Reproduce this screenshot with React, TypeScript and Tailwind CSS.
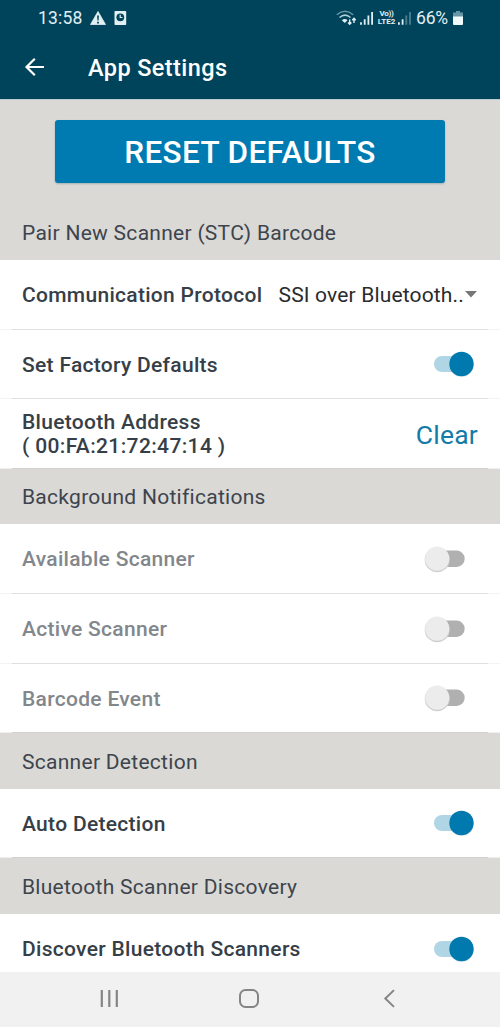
import type { ReactNode } from "react";

function Toggle({ on }: { on: boolean }) {
  return (
    <svg className="mr-[24px] h-[32px] w-[54px] shrink-0" viewBox="0 0 54 32">
      {on ? (
        <>
          <rect x="12" y="8" width="36" height="16" rx="8" fill="#b0d6e6" />
          <circle cx="39.5" cy="17" r="12" fill="#003c5a" opacity=".12" />
          <circle cx="39.5" cy="16" r="12.2" fill="#0079ae" />
        </>
      ) : (
        <>
          <rect x="6" y="7.500" width="36.700" height="16.400" rx="8.200" fill="#b0b0b0" />
          <circle cx="15.200" cy="16.700" r="12.500" fill="#cfcfcf" />
          <circle cx="15.200" cy="15.700" r="12.100" fill="#ececec" />
        </>
      )}
    </svg>
  );
}

function Section({ children, className }: { children: ReactNode; className: string }) {
  return (
    <h2 className={`flex shrink-0 items-center bg-[#dad9d5] pl-[22px] text-[21px] font-normal tracking-[0.280px] whitespace-nowrap text-[#3d444d] ${className}`}>
      {children}
    </h2>
  );
}

function Row({ label, children, className, off, last }: { label: ReactNode; children: ReactNode; className: string; off?: boolean; last?: boolean }) {
  return (
    <div className={`flex shrink-0 flex-col bg-white ${className}`}>
      <div className={`flex min-h-0 flex-1 items-center justify-between pl-[22px] text-[21px] leading-[24px] font-medium tracking-[0.300px] whitespace-nowrap ${off ? "text-[#82878c]" : "text-[#363e47]"}`}>
        <span className="pt-px">{label}</span>
        {children}
      </div>
      <div className={`flex h-px shrink-0 ${last ? "bg-[#efefed]" : "bg-[#f3f3f3]"}`}>
        <div className={`mx-[12px] flex-1 ${last ? "bg-[#d2d2cf]" : "bg-[#dfdfdf]"}`} />
      </div>
    </div>
  );
}

export default function App() {
  return (
    <div className="flex h-[1027px] w-[500px] flex-col overflow-hidden bg-[#dad9d5] font-['Roboto',sans-serif]">
      <header className="flex h-[99px] shrink-0 flex-col bg-[#00445b] text-white">
        <div className="flex h-[36px] items-center justify-between pr-[37px] pl-[38px] text-[#e2eff3]">
          <div className="flex items-center">
            <span className="w-[52px] text-[17.500px] tracking-[0.200px]">13:58</span>
            <svg className="h-[16px] w-[37px]" viewBox="0 0 37 16">
              <path d="M8 1.500 15.500 14.500H.500Z" fill="currentColor" stroke="currentColor" strokeWidth=".8" strokeLinejoin="round" />
              <path d="M7.100 5.500h1.800l-.3 5H7.400Zm0 6.200h1.800v1.700H7.100Z" fill="#00445b" />
              <rect x="24.500" y="1" width="11.700" height="14" rx=".8" fill="currentColor" />
              <circle cx="30.300" cy="7.300" r="3.900" fill="#00445b" />
              <path d="M30.200 4.700v2.800h2.300" fill="none" stroke="currentColor" strokeWidth="1.200" />
            </svg>
          </div>
          <div className="flex items-center">
            <svg className="mr-[2px] h-[18px] w-[39px]" viewBox="0 0 39 18" fill="none">
              <path d="M.8 5.700Q9 -1.300 17.200 5.700" stroke="#6896a5" strokeWidth="1.500" />
              <path d="M3.500 8.500Q9 3.700 14.500 8.500" stroke="#b5ced6" strokeWidth="1.500" />
              <path d="M5.800 11.300Q9 8.700 11.500 11.300L8.800 14Z" fill="#e2eff3" />
              <path d="M13.700 10.500V15M12 13.400 13.700 15.200 15.400 13.400M18 14V9.500M16.300 11.200 18 9.300 19.700 11.200" stroke="#e2eff3" strokeWidth="1.400" />
              <path d="M25 13.200v2.600M28.700 10.300v5.500M32.400 6.600v9.200M36.100 3v12.800" stroke="#e2eff3" strokeWidth="1.800" />
            </svg>
            <div className="flex w-[19px] flex-col items-center text-[8px] leading-[8px] font-bold whitespace-nowrap">
              <span className="tracking-[-0.300px]">Vo))</span>
              <span>LTE2</span>
            </div>
            <svg className="mr-[4px] ml-px h-[18px] w-[15px]" viewBox="0 0 15 18" strokeWidth="1.800">
              <path d="M1.900 13.200v2.600M5.600 10.300v5.500" stroke="#e2eff3" />
              <path d="M9.300 6.600v9.200M13 3v12.800" stroke="#4c7e90" />
            </svg>
            <span className="w-[37px] text-[17.500px] tracking-[-0.200px] whitespace-nowrap">66%</span>
            <svg className="h-[15px] w-[10px]" viewBox="0 0 10 15">
              <path d="M3 0h4v1.500h3V6H0V1.500h3Z" fill="#6797a6" />
              <path d="M0 5.500h10V13a1 1 0 0 1-1 1H1a1 1 0 0 1-1-1Z" fill="#f1fafb" />
            </svg>
          </div>
        </div>
        <div className="flex h-[63px] items-center pl-[24px]">
          <svg className="mb-px h-[20px] w-[64px]" viewBox="0 0 64 20" fill="none" stroke="white" strokeWidth="2.200">
            <path d="M20 10H2.500M10.800 1.700 2.500 10l8.300 8.300" />
          </svg>
          <h1 className="pt-[2px] text-[23.500px] font-medium tracking-[0.400px]">App Settings</h1>
        </div>
      </header>
      <main className="flex min-h-0 flex-1 flex-col overflow-hidden">
        <div className="flex h-[106px] shrink-0 items-start justify-center border-t border-[#b8cbd0] pt-[20px]">
          <button className="h-[62.500px] w-[390px] rounded-[3px] bg-[#007bb1] pt-[3px] text-[31.500px] font-medium tracking-[0.350px] text-white shadow-[0_1px_2px_rgba(0,60,90,0.25)]">RESET DEFAULTS</button>
        </div>
        <Section className="h-[55px] pt-[2px]">Pair New Scanner (STC) Barcode</Section>
        <Row className="h-[70px]" label="Communication Protocol">
          <div className="mr-[23px] flex items-center font-normal text-[#292b2d]">
            <span className="tracking-[0.160px]">SSI over Bluetooth..</span>
            <svg className="ml-[1px] h-[7px] w-[12px]" viewBox="0 0 12 7"><path d="M0 0h12L6 6.500Z" fill="#777" /></svg>
          </div>
        </Row>
        <Row className="h-[69px]" label="Set Factory Defaults"><Toggle on /></Row>
        <Row className="h-[70px]" last label={<>Bluetooth Address<br /><span className="tracking-[0.370px]">( 00:FA:21:72:47:14 )</span></>}>
          <button className="mr-[22px] pt-[2px] text-[26.500px] font-normal tracking-[0.200px] text-[#127ba7]">Clear</button>
        </Row>
        <Section className="h-[55px] pt-[2px]">Background Notifications</Section>
        <Row className="h-[70px]" off label="Available Scanner"><Toggle on={false} /></Row>
        <Row className="h-[70px]" off label="Active Scanner"><Toggle on={false} /></Row>
        <Row className="h-[69px]" off last label="Barcode Event"><Toggle on={false} /></Row>
        <Section className="h-[56px] pt-[3px]">Scanner Detection</Section>
        <Row className="h-[69px]" last label="Auto Detection"><Toggle on /></Row>
        <Section className="h-[56px] pt-[3px]">Bluetooth Scanner Discovery</Section>
        <Row className="h-[70px]" label="Discover Bluetooth Scanners"><Toggle on /></Row>
      </main>
      <nav className="flex h-[55px] shrink-0 items-center bg-[#f1f1f1] pb-[2px] pl-[99px] text-[#858585]">
        <svg className="h-[20px] w-[20px]" viewBox="0 0 20 20" stroke="currentColor" strokeWidth="2.200"><path d="M2.800 1v17M10.300 1v17M17.800 1v17" /></svg>
        <svg className="ml-[120px] h-[20px] w-[20px]" viewBox="0 0 20 20" fill="none" stroke="currentColor" strokeWidth="2"><rect x="1" y="1" width="18" height="17" rx="5.500" /></svg>
        <svg className="ml-[124px] h-[20px] w-[12px]" viewBox="0 0 12 20" fill="none" stroke="currentColor" strokeWidth="2"><path d="M11 1.100 2.300 9.500l8.700 8.400" /></svg>
      </nav>
    </div>
  );
}
